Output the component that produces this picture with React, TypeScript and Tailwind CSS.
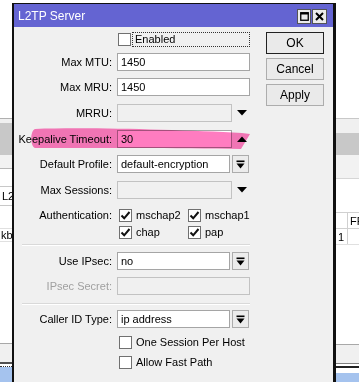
import React from "react";

const F = "font-['Liberation_Sans',Arial,sans-serif]";

function Check({ checked }: { checked?: boolean }) {
  return (
    <span className="w-[13px] h-[13px] border border-[#707070] bg-white flex items-center justify-center shrink-0">
      {checked && (
        <svg width="11" height="11" viewBox="0 0 11 11">
          <path d="M1.5 5.5 L4.2 8.3 L9.5 2" stroke="#111" strokeWidth="2" fill="none" />
        </svg>
      )}
    </span>
  );
}

function Tri({ up, color = "#000" }: { up?: boolean; color?: string }) {
  return (
    <svg width="10" height="6" viewBox="0 0 10 6" className="shrink-0">
      {up ? <path d="M0 6 L5 0.5 L10 6 Z" fill={color} /> : <path d="M0 0 L10 0 L5 5.5 Z" fill={color} />}
    </svg>
  );
}

function DropBtn() {
  return (
    <span className="ml-[2px] w-[17px] h-[18px] border border-[#acacac] bg-[#ececec] flex items-center justify-center">
      <svg width="9" height="9" viewBox="0 0 9 9">
        <rect x="0.5" y="0.5" width="8" height="1.6" fill="#000" />
        <path d="M0.5 3.5 L8.5 3.5 L4.5 8.5 Z" fill="#000" />
      </svg>
    </span>
  );
}

function Label({ text, gray }: { text?: string; gray?: boolean }) {
  return (
    <div className={`w-[98px] text-right whitespace-nowrap ${gray ? "text-[#a0a0a0]" : "text-black"}`}>{text}</div>
  );
}

function TextBox({ value, w, disabled }: { value?: string; w: string; disabled?: boolean }) {
  return (
    <div
      className={`${w} h-[18px] border flex items-center px-[3px] ${
        disabled ? "bg-[#f0f0f0] border-[#c2c2c2]" : "bg-white border-[#a5a5a5]"
      }`}
    >
      {value}
    </div>
  );
}

function Sep() {
  return <div className="ml-[8px] w-[228px] border-t border-[#d9d9d9] border-b border-b-white" />;
}

function WinBtn({ label, def }: { label: string; def?: boolean }) {
  return (
    <div
      className={`w-[58px] h-[22px] flex items-center justify-center text-[12px] bg-[#eaeaea] ${
        def ? "border border-[#222]" : "border border-[#adadad]"
      }`}
    >
      {label}
    </div>
  );
}

function LeftStrip() {
  return (
    <div className="w-[12px] flex flex-col shrink-0 bg-white">
      <div className="h-[118px] bg-white" />
      <div className="h-px bg-[#b0b0b0]" />
      <div className="h-[4px] bg-[#f0f0f0]" />
      <div className="h-[32px] bg-[#c8c8c8]" />
      <div className="h-[13px] bg-[#f2f2f2]" />
      <div className="h-px bg-[#b8b8b8]" />
      <div className="h-[17px] bg-white" />
      <div className="h-[20px] border-y border-[#c8c8c8] flex items-center overflow-hidden text-[11px] text-black pl-[2px] whitespace-nowrap">
        L2TP
      </div>
      <div className="h-[22px] bg-white" />
      <div className="h-[14px] border-y border-[#e0e0e0] flex items-center overflow-hidden text-[11px] whitespace-nowrap pl-[1px]">
        kb
      </div>
      <div className="h-[101px] bg-white" />
      <div className="h-px bg-[#a8a8a8]" />
      <div className="h-[18px] bg-[#f0f0f0]" />
      <div className="h-[2px] bg-[#505050]" />
      <div className="h-[3px] bg-white border-b border-dotted border-[#333]" />
      <div className="flex-1 bg-[#a5c3ee]" />
    </div>
  );
}

function RightStrip() {
  return (
    <div className="flex-1 flex flex-col bg-white">
      <div className="h-[118px] bg-white" />
      <div className="h-px bg-[#c8c8c8]" />
      <div className="h-[14px] bg-[#f0f0f0]" />
      <div className="h-[22px] bg-[#c8c8c8]" />
      <div className="h-[23px] bg-[#f2f2f2]" />
      <div className="h-px bg-[#d6d6d6]" />
      <div className="h-[33px] bg-white" />
      <div className="h-[17px] flex border-y border-[#d0d0d0] text-[11px]">
        <div className="w-[12px] border-r border-[#d0d0d0]" />
        <div className="pl-[2px] overflow-hidden whitespace-nowrap">FF</div>
      </div>
      <div className="h-[16px] flex text-[11px] border-b border-[#e0e0e0]">
        <div className="w-[12px] border-r border-[#d0d0d0] pl-[2px]">1</div>
      </div>
      <div className="h-[99px] bg-white" />
      <div className="h-px bg-[#a8a8a8]" />
      <div className="h-[18px] bg-[#f0f0f0]" />
      <div className="h-px bg-[#808080]" />
      <div className="h-[2px] bg-white" />
      <div className="h-[2px] bg-[#222]" />
      <div className="h-[5px] bg-white" />
      <div className="flex-1 bg-[#a5c3ee]" />
    </div>
  );
}

export default function App() {
  return (
    <div className={`w-[359px] h-[382px] overflow-hidden bg-white flex text-[11px] text-black ${F}`}>
      <LeftStrip />
      <div className="w-[324px] shrink-0 mt-[3px] flex flex-col border-l-2 border-r-[3px] border-t border-[#111]">
        <div className="h-[23px] bg-[#6464d2] flex items-center pl-[4px] pr-[6px]">
          <span className="text-white text-[12px]">L2TP Server</span>
          <div className="ml-auto flex gap-[1px] mt-[1px]">
            <span className="w-[14px] h-[15px] bg-[#ececec] border border-[#555] flex items-center justify-center">
              <svg width="9" height="9" viewBox="0 0 9 9">
                <rect x="0.75" y="0.75" width="7.5" height="7.5" fill="none" stroke="#000" strokeWidth="1.3" />
                <rect x="0.5" y="0.5" width="8" height="2" fill="#000" />
              </svg>
            </span>
            <span className="w-[15px] h-[15px] bg-[#ececec] border border-[#555] flex items-center justify-center">
              <svg width="9" height="9" viewBox="0 0 9 9">
                <path d="M1 1 L8 8 M8 1 L1 8" stroke="#000" strokeWidth="2" />
              </svg>
            </span>
          </div>
        </div>
        <div className="relative flex-1 bg-[#f0f0f0] flex">
          <div className="flex flex-col w-[236px]">
            {/* Enabled */}
            <div className="flex items-center h-[15px] mt-[5px]">
              <Label />
              <div className="ml-[7px] flex items-center">
                <Check />
                <span className="ml-px h-[15px] w-[118px] border border-dotted border-[#333] flex items-center pl-[2px]">Enabled</span>
              </div>
            </div>
            <div className="flex items-center h-[18px] mt-[6px]">
              <Label text="Max MTU:" />
              <div className="ml-[5px]"><TextBox value="1450" w="w-[133px]" /></div>
            </div>
            <div className="flex items-center h-[18px] mt-[7px]">
              <Label text="Max MRU:" />
              <div className="ml-[5px]"><TextBox value="1450" w="w-[133px]" /></div>
            </div>
            <div className="flex items-center h-[18px] mt-[8px]">
              <Label text="MRRU:" />
              <div className="ml-[5px] flex items-center">
                <TextBox w="w-[115px]" disabled />
                <span className="ml-[5px]"><Tri /></span>
              </div>
            </div>
            <div className="flex items-center h-[18px] mt-[8px]">
              <Label text="Keepalive Timeout:" />
              <div className="ml-[5px] flex items-center">
                <TextBox value="30" w="w-[115px]" />
                <span className="ml-[5px]"><Tri up /></span>
              </div>
            </div>
            <div className="flex items-center h-[18px] mt-[7px]">
              <Label text="Default Profile:" />
              <div className="ml-[5px] flex items-center">
                <TextBox value="default-encryption" w="w-[113px]" />
                <DropBtn />
              </div>
            </div>
            <div className="flex items-center h-[18px] mt-[8px]">
              <Label text="Max Sessions:" />
              <div className="ml-[5px] flex items-center">
                <TextBox w="w-[115px]" disabled />
                <span className="ml-[5px]"><Tri /></span>
              </div>
            </div>
            {/* Authentication */}
            <div className="flex mt-[10px]">
              <div className="h-[13px] flex items-center"><Label text="Authentication:" /></div>
              <div className="ml-[7px] grid grid-cols-[69px_auto] gap-y-[4px]">
                <div className="flex items-center h-[13px]"><Check checked /><span className="ml-[4px]">mschap2</span></div>
                <div className="flex items-center h-[13px]"><Check checked /><span className="ml-[4px]">mschap1</span></div>
                <div className="flex items-center h-[13px]"><Check checked /><span className="ml-[4px]">chap</span></div>
                <div className="flex items-center h-[13px]"><Check checked /><span className="ml-[4px]">pap</span></div>
              </div>
            </div>
            <div className="mt-[5px]"><Sep /></div>
            <div className="flex items-center h-[18px] mt-[6px]">
              <Label text="Use IPsec:" />
              <div className="ml-[5px] flex items-center">
                <TextBox value="no" w="w-[113px]" />
                <DropBtn />
              </div>
            </div>
            <div className="flex items-center h-[18px] mt-[7px]">
              <Label text="IPsec Secret:" gray />
              <div className="ml-[5px]"><TextBox w="w-[133px]" disabled /></div>
            </div>
            <div className="mt-[8px]"><Sep /></div>
            <div className="flex items-center h-[18px] mt-[5px]">
              <Label text="Caller ID Type:" />
              <div className="ml-[5px] flex items-center">
                <TextBox value="ip address" w="w-[113px]" />
                <DropBtn />
              </div>
            </div>
            <div className="flex items-center h-[13px] mt-[8px]">
              <Label />
              <div className="ml-[7px] flex items-center"><Check /><span className="ml-[4px]">One Session Per Host</span></div>
            </div>
            <div className="flex items-center h-[13px] mt-[7px]">
              <Label />
              <div className="ml-[7px] flex items-center"><Check /><span className="ml-[4px]">Allow Fast Path</span></div>
            </div>
          </div>
          <div className="ml-[16px] mt-[5px] flex flex-col gap-[4px]">
            <WinBtn label="OK" def />
            <WinBtn label="Cancel" />
            <WinBtn label="Apply" />
          </div>
          {/* highlighter stroke */}
          <svg
            className="absolute left-[16px] top-[98px] mix-blend-multiply pointer-events-none"
            width="224"
            height="28"
            viewBox="0 0 224 28"
          >
            <path
              d="M5 4 C 60 2, 150 5, 212 8 L 220 9 L 211 24 C 150 23, 60 23, 5 23 C 0 21, 0 6, 5 4 Z"
              fill="#ff7cc0"
            />
          </svg>
        </div>
      </div>
      <RightStrip />
    </div>
  );
}
